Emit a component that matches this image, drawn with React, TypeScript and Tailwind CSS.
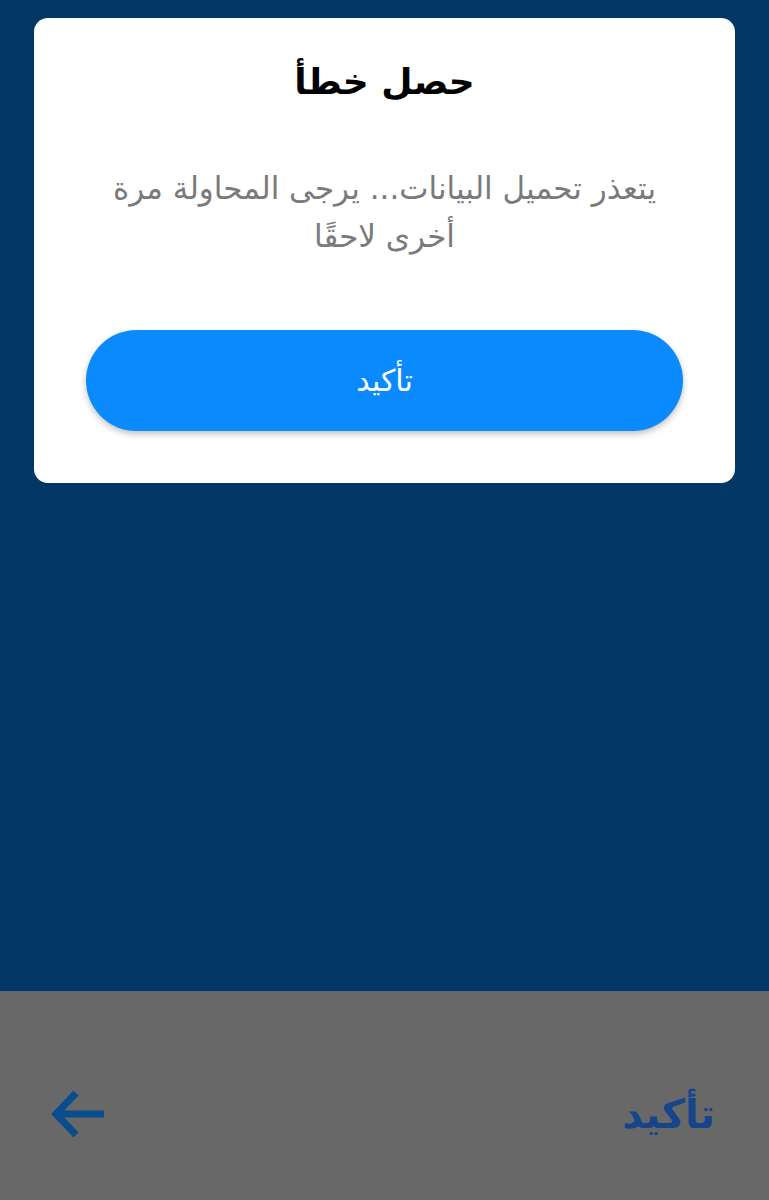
import React from "react";

export default function App() {
  return (
    <div dir="rtl" className="w-[769px] h-[1200px] flex flex-col bg-[#023766]" style={{ fontFamily: '"DejaVu Sans", "Noto Sans", sans-serif' }}>
      <div className="h-[991px] px-[34px] pt-[18px]">
        <div className="bg-white rounded-[14px] flex flex-col items-center pt-[42px] pb-[52px]">
          <h1 className="text-[36px] leading-[44px] font-bold text-black">حصل خطأ</h1>
          <p className="mt-[60px] text-[31px] leading-[48px] text-[#7a7a7a] text-center px-[72px]">
            يتعذر تحميل البيانات... يرجى المحاولة مرة أخرى لاحقًا
          </p>
          <button className="mt-[70px] w-[597px] h-[101px] rounded-full bg-[#0a8afd] text-white text-[30px] shadow-[0_3px_6px_rgba(0,0,0,0.25)]">
            تأكيد
          </button>
        </div>
      </div>
      <div className="flex-1 bg-[#686868] border-t border-[#5a6a7a] flex items-center justify-between px-[52px] pt-[36px]">
        <span className="text-[40px] font-bold text-[#17458a] mr-[2px]">تأكيد</span>
        <svg width="56" height="54" viewBox="0 0 56 54" fill="none" className="ml-[-2px]">
          <path d="M54 27H7M26 6L6 27L26 48" stroke="#0b4c8c" strokeWidth="7" strokeLinejoin="miter" />
        </svg>
      </div>
    </div>
  );
}
